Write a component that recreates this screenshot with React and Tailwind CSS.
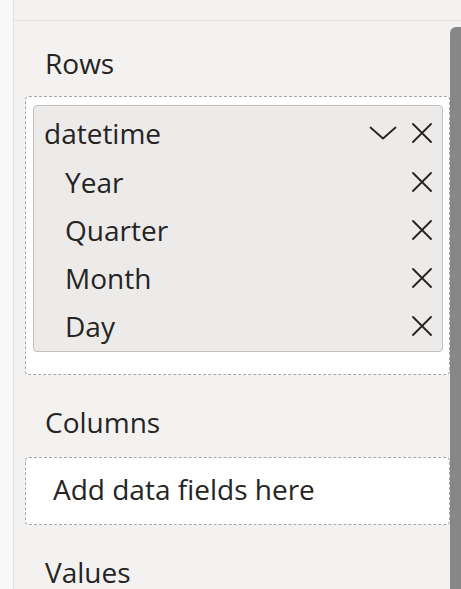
import React from 'react';

const font = { fontFamily: '"Open Sans", "Noto Sans", sans-serif' };

const CloseIcon = () => (
  <svg width="20" height="20" viewBox="0 0 20 20" className="shrink-0">
    <path d="M1 1 L19 19 M19 1 L1 19" stroke="#252423" strokeWidth="1.8" fill="none" strokeLinecap="round" />
  </svg>
);

const ChevronIcon = () => (
  <svg width="28" height="14" viewBox="0 0 28 14" className="shrink-0">
    <path d="M1.5 1.5 L14 12.5 L26.5 1.5" stroke="#252423" strokeWidth="1.8" fill="none" strokeLinecap="round" strokeLinejoin="round" />
  </svg>
);

const FieldRow = ({ label, sub, chevron }) => (
  <div className={`flex items-center pr-[10px] ${sub ? 'h-[48px] pl-[31px]' : 'h-[50px] pl-[10px]'}`}>
    <span className="flex-1 leading-[38px]">{label}</span>
    {chevron && (
      <span className="mr-[15px] flex items-center">
        <ChevronIcon />
      </span>
    )}
    <CloseIcon />
  </div>
);

const SectionLabel = ({ children, className = '' }) => (
  <div className={`h-[38px] pl-[20px] leading-[38px] ${className}`}>{children}</div>
);

export default function App() {
  const hierarchy = ['Year', 'Quarter', 'Month', 'Day'];

  return (
    <div className="flex h-[589px] w-[461px] overflow-hidden bg-[#f3f2f1] text-[28px] text-[#252423]" style={font}>
      <div className="w-[14px] shrink-0 border-r border-[#e3e2e1] bg-[#f8f8f8]" />
      <div className="flex flex-1 flex-col">
        <div className="h-[21px] shrink-0 border-b border-[#e1dfdd]" />
        <div className="flex flex-1 overflow-hidden">
          <div className="flex-1 pl-[11px] pt-[23px]">
            <SectionLabel>Rows</SectionLabel>
            <div className="mt-[14px] h-[279px] rounded-[4px] border border-dashed border-[#a8a6a4] bg-white pl-[7px] pr-[6px] pt-[8px]">
              <div className="rounded-[4px] border border-[#c4c2c0] bg-[#ecebea] pb-[1px] pt-[2px]">
                <FieldRow label="datetime" chevron />
                {hierarchy.map((item) => (
                  <FieldRow key={item} label={item} sub />
                ))}
              </div>
            </div>

            <SectionLabel className="mt-[28px]">Columns</SectionLabel>
            <div className="mt-[16px] h-[68px] rounded-[4px] border border-dashed border-[#a8a6a4] bg-white pl-[27px] pt-[12px]">
              <div className="leading-[38px]">Add data fields here</div>
            </div>

            <SectionLabel className="mt-[28px]">Values</SectionLabel>
          </div>
          <div className="flex w-[11px] shrink-0 flex-col pt-[6px]">
            <div className="flex-1 rounded-tl-[6px] bg-[#878787]" />
          </div>
        </div>
      </div>
    </div>
  );
}
